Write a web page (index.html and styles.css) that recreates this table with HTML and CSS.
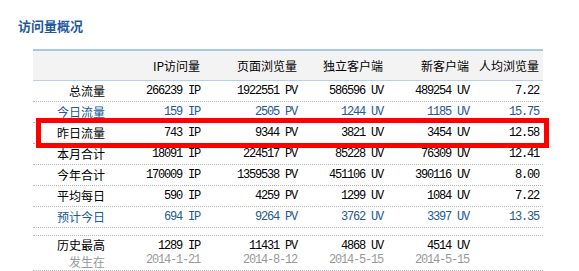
FILE: index.html
```html
<!DOCTYPE html>
<html lang="zh-CN">
<head>
  <meta charset="UTF-8" />
  <title>访问量概况</title>
  <link rel="stylesheet" href="styles.css">
</head>
<body>
  <h2 class="title">访问量概况</h2>
  <div class="stats">
    <div class="row head">
      <div></div>
      <div>IP访问量</div>
      <div>页面浏览量</div>
      <div>独立客户端</div>
      <div>新客户端</div>
      <div>人均浏览量</div>
    </div>
    <div class="row">
      <div class="label">总流量</div>
      <div class="num">266239 IP</div>
      <div class="num">1922551 PV</div>
      <div class="num">586596 UV</div>
      <div class="num">489254 UV</div>
      <div class="num">7.22</div>
    </div>
    <div class="row blue">
      <div class="label">今日流量</div>
      <div class="num">159 IP</div>
      <div class="num">2505 PV</div>
      <div class="num">1244 UV</div>
      <div class="num">1185 UV</div>
      <div class="num">15.75</div>
    </div>
    <div class="row marked">
      <div class="label">昨日流量</div>
      <div class="num">743 IP</div>
      <div class="num">9344 PV</div>
      <div class="num">3821 UV</div>
      <div class="num">3454 UV</div>
      <div class="num">12.58</div>
    </div>
    <div class="row">
      <div class="label">本月合计</div>
      <div class="num">18091 IP</div>
      <div class="num">224517 PV</div>
      <div class="num">85228 UV</div>
      <div class="num">76309 UV</div>
      <div class="num">12.41</div>
    </div>
    <div class="row">
      <div class="label">今年合计</div>
      <div class="num">170009 IP</div>
      <div class="num">1359538 PV</div>
      <div class="num">451106 UV</div>
      <div class="num">390116 UV</div>
      <div class="num">8.00</div>
    </div>
    <div class="row">
      <div class="label">平均每日</div>
      <div class="num">590 IP</div>
      <div class="num">4259 PV</div>
      <div class="num">1299 UV</div>
      <div class="num">1084 UV</div>
      <div class="num">7.22</div>
    </div>
    <div class="row blue">
      <div class="label">预计今日</div>
      <div class="num">694 IP</div>
      <div class="num">9264 PV</div>
      <div class="num">3762 UV</div>
      <div class="num">3397 UV</div>
      <div class="num">13.35</div>
    </div>
    <div class="spacer"></div>
    <div class="row tall">
      <div class="label">历史最高<span class="sub">发生在</span></div>
      <div class="num">1289 IP<span class="sub">2014-1-21</span></div>
      <div class="num">11431 PV<span class="sub">2014-8-12</span></div>
      <div class="num">4868 UV<span class="sub">2014-5-15</span></div>
      <div class="num">4514 UV<span class="sub">2014-5-15</span></div>
      <div class="num"></div>
    </div>
  </div>
</body>
</html>
```

FILE: styles.css
```css
body {
  margin: 0;
  padding: 0;
  background: #fff;
  font-family: 'Noto Sans CJK SC', 'DejaVu Sans', sans-serif;
  font-size: 12px;
  color: #000;
}
.title {
  margin: 0;
  padding: 18px 0 0 18px;
  height: 31px;
  font-size: 13px;
  line-height: 16px;
  font-weight: bold;
  color: #1f5a9e;
}
.stats {
  margin-left: 33px;
  width: 510px;
}
.row {
  display: grid;
  grid-template-columns: 72px 95px 97px 86px 86px 70px;
  height: 20px;
  border-bottom: 1px dotted #b8b8b8;
  align-items: center;
  text-align: right;
  line-height: 14px;
  position: relative;
}
.row.head {
  height: 29px;
  background: #f3f3f3;
  border-top: 2px solid #aac6e4;
  border-bottom: 1px solid #b8d1ea;
}
.num {
  font-family: 'Liberation Mono', 'Noto Sans CJK SC', monospace;
  letter-spacing: -1.2px;
  white-space: pre;
}
.row.blue {
  color: #225a93;
}
.row.marked::after {
  content: "";
  position: absolute;
  left: 3px;
  top: -5px;
  right: -6px;
  bottom: -5px;
  border: 5px solid #ff0000;
}
.spacer {
  height: 7px;
  border-bottom: 1px dotted #b8b8b8;
}
.row.tall {
  height: 34px;
  line-height: 14px;
}
.row.tall .label {
  line-height: 17px;
}
.sub {
  display: block;
  color: #999;
}
```
